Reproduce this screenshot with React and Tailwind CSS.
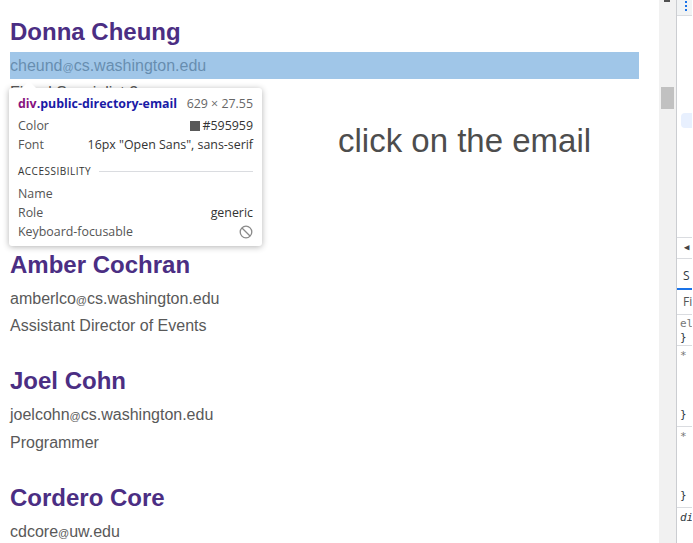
import React from 'react';

const people = [
  { name: 'Donna Cheung', user: 'cheund', domain: 'cs.washington.edu', title: 'Fiscal Specialist 2', selected: true },
  { hidden: true, name: 'hidden' },
  { name: 'Amber Cochran', user: 'amberlco', domain: 'cs.washington.edu', title: 'Assistant Director of Events' },
  { name: 'Joel Cohn', user: 'joelcohn', domain: 'cs.washington.edu', title: 'Programmer' },
  { name: 'Cordero Core', user: 'cdcore', domain: 'uw.edu', title: 'Student Services' },
];

const Person = ({ person }) => {
  // entry fully covered by the inspect tooltip: keep its space only
  if (person.hidden) return <div className="h-[116.5px]" />;
  return (
    <div className="mb-[27.4px]">
      <h3 className="text-[24px] leading-[28px] font-bold text-[#4b2e83]">{person.name}</h3>
      <div className="relative mt-[6px] h-[27.55px] leading-[27.55px] text-[16px] text-[#595959] whitespace-nowrap">
        {person.user}
        <span className="text-[11px]">@</span>
        {person.domain}
        {/* devtools element highlight */}
        {person.selected && <div className="absolute inset-0 bg-[rgba(111,168,220,0.66)]" />}
      </div>
      <div className="h-[27.55px] leading-[27.55px] text-[16px] text-[#595959] whitespace-nowrap">{person.title}</div>
    </div>
  );
};

const InspectTooltip = () => (
  <div className="absolute left-[9px] top-[88px] w-[253px] h-[158px] bg-white rounded-[3px] shadow-[0_1px_6px_rgba(0,0,0,0.3)] px-[9px] pt-[7px] font-['Open_Sans',sans-serif] text-[12.4px] text-[#333]">
    {/* arrow */}
    <div className="absolute left-[13px] -top-[7px] w-0 h-0 border-l-[7px] border-r-[7px] border-b-[7px] border-l-transparent border-r-transparent border-b-white" />
    <div className="flex justify-between items-center h-[18px] leading-[18px]">
      <span className="font-bold">
        <span className="text-[#881280]">div</span>
        <span className="text-[#1a1aa6]">.public-directory-email</span>
      </span>
      <span className="text-[#666]">629 × 27.55</span>
    </div>
    <div className="mt-[3px] flex justify-between items-center h-[19px] leading-[19px]">
      <span className="text-[#555]">Color</span>
      <span className="flex items-center gap-[2px] text-[#333]">
        <span className="inline-block w-[10px] h-[10px] bg-[#595959]" />
        #595959
      </span>
    </div>
    <div className="flex justify-between items-center h-[19px] leading-[19px]">
      <span className="text-[#555]">Font</span>
      <span className="text-[#333]">16px "Open Sans", sans-serif</span>
    </div>
    <div className="mt-[8px] flex items-center h-[18px] gap-[8px]">
      <span className="text-[10px] tracking-[0.5px] text-[#333]">ACCESSIBILITY</span>
      <div className="flex-1 h-px bg-[#dadce0]" />
    </div>
    <div className="mt-[4px] h-[19px] leading-[19px] text-[#555]">Name</div>
    <div className="flex justify-between items-center h-[19px] leading-[19px]">
      <span className="text-[#555]">Role</span>
      <span className="text-[#333]">generic</span>
    </div>
    <div className="flex justify-between items-center h-[19px] leading-[19px]">
      <span className="text-[#555]">Keyboard-focusable</span>
      <svg width="14" height="14" viewBox="0 0 14 14" fill="none" stroke="#8a8a8a" strokeWidth="1.3">
        <circle cx="7" cy="7" r="5.8" />
        <path d="M3 3l8 8" />
      </svg>
    </div>
  </div>
);

const DevtoolsPane = () => (
  <div className="w-[16px] border-l border-[#cbcdd1] bg-white flex flex-col font-['DejaVu_Sans_Mono',monospace] text-[11px] text-[#303942] overflow-hidden">
    <div className="h-[16px] border-b border-[#dadce0] bg-[#f1f3f4] flex items-start pl-[8px] pt-[1px]">
      <div className="w-[6px] h-[10px] border-l-2 border-dotted border-[#1a73e8]" />
    </div>
    <div className="h-[221px] relative">
      <div className="absolute left-[4px] top-[97px] w-[20px] h-[15px] rounded-[4px] bg-[#e8f0fe]" />
    </div>
    <div className="h-[22px] border-t border-b border-[#dadce0] flex items-center pl-[7px] text-[9px] text-[#444]">◀</div>
    <div className="h-[31px] flex items-end pb-[3px] pl-[6px] font-['Open_Sans',sans-serif] text-[12px] border-b-2 border-[#1a73e8]">S</div>
    <div className="h-[25px] border-b border-[#dadce0] flex items-center pl-[6px] font-['Open_Sans',sans-serif] text-[12px] text-[#555]">Fi</div>
    <div className="pl-[3px] pt-[2px] leading-[14px]">
      <div className="text-[#777]">el</div>
      <div>{'}'}</div>
    </div>
    <div className="h-[81px] border-t border-[#dadce0] pl-[3px] pt-[3px] leading-[14px] flex flex-col justify-between pb-[4px]">
      <div className="text-[#777]">*</div>
      <div>{'}'}</div>
    </div>
    <div className="h-[81px] border-t border-[#dadce0] pl-[3px] pt-[3px] leading-[14px] flex flex-col justify-between pb-[4px]">
      <div className="text-[#777]">*</div>
      <div>{'}'}</div>
    </div>
    <div className="border-t border-[#dadce0] pl-[3px] pt-[2px] italic">di</div>
  </div>
);

export default function App() {
  return (
    <div className="flex w-[693px] h-[543px] overflow-hidden bg-white">
      <div className="relative w-[659px] h-full overflow-hidden pl-[10px] pr-[20px] pt-[17.7px] font-['Liberation_Sans',Arial,sans-serif]">
        {people.map((p) => (
          <Person key={p.name} person={p} />
        ))}
        <InspectTooltip />
        <div className="absolute left-[338px] top-[124px] text-[33px] leading-[33px] text-[#4d4d4d]">click on the email</div>
      </div>
      {/* page scrollbar */}
      <div className="w-[17px] h-full bg-[#f1f1f1] relative">
        <div className="absolute left-[5px] top-0 w-[6px] h-[2px] bg-[#505050]" />
        <div className="absolute left-[2px] top-[87px] w-[13px] h-[22px] bg-[#c1c1c1]" />
      </div>
      <DevtoolsPane />
    </div>
  );
}
